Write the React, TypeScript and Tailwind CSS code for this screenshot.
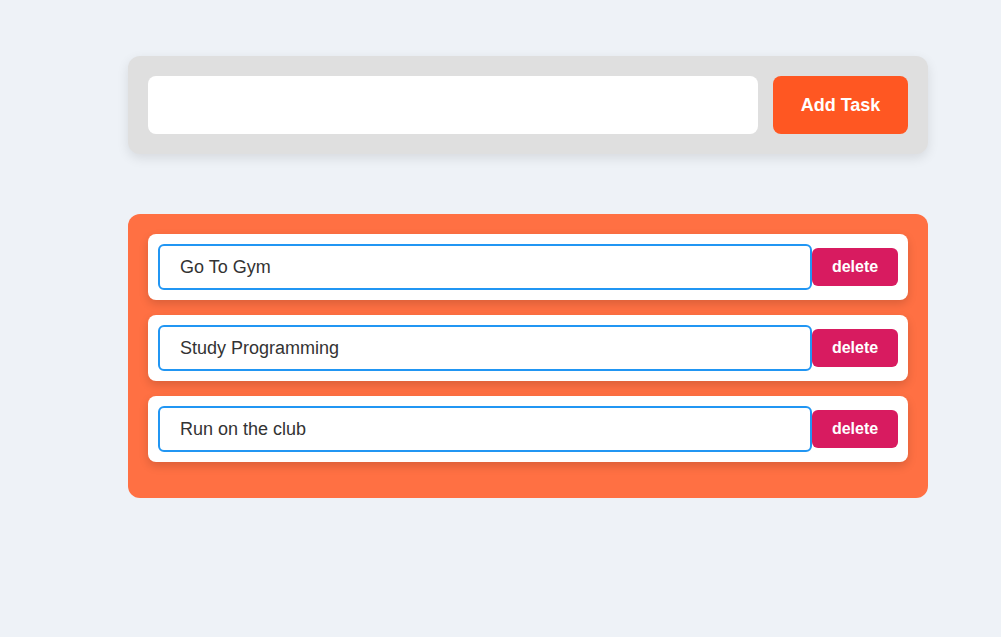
import React from 'react'

const tasks = ['Go To Gym', 'Study Programming', 'Run on the club']

export default function App() {
  return (
    <div className="min-h-[637px] w-full bg-[#eef2f7] pt-[56px] font-['Liberation_Sans',Arial,sans-serif]">
      <div className="ml-[128px] w-[800px]">
        {/* Add task form */}
        <div className="flex items-center gap-[15px] rounded-[12px] bg-[#dfdfdf] p-[20px] shadow-[0_4px_12px_rgba(0,0,0,0.1)]">
          <input
            type="text"
            className="h-[58px] flex-1 rounded-[8px] bg-white px-4 text-[18px] outline-none"
          />
          <button className="h-[58px] w-[135px] rounded-[8px] bg-[#ff5722] text-[18px] font-bold text-white">
            Add Task
          </button>
        </div>

        {/* Task list */}
        <div className="mt-[60px] rounded-[12px] bg-[#ff7043] px-[20px] pt-[20px] pb-[21px]">
          {tasks.map((t) => (
            <div
              key={t}
              className="mb-[15px] flex items-center rounded-[8px] bg-white p-[10px] shadow-[0_4px_10px_rgba(0,0,0,0.15)]"
            >
              <input
                type="text"
                defaultValue={t}
                className="h-[46px] flex-1 rounded-[6px] border-2 border-[#2196f3] bg-white pl-[20px] text-[18px] text-[#333] outline-none"
              />
              <button className="h-[38px] w-[86px] rounded-[6px] bg-[#d81b60] text-[16px] font-bold text-white">
                delete
              </button>
            </div>
          ))}
        </div>
      </div>
    </div>
  )
}
